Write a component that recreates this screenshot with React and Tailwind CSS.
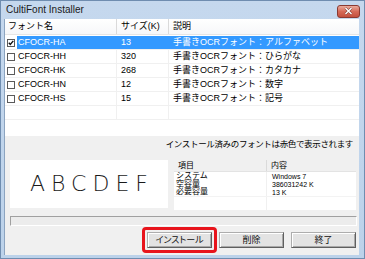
import React from 'react';

const fonts = [
  { name: 'CFOCR-HA', size: '13', desc: '手書きOCRフォント：アルファベット', checked: true, selected: true },
  { name: 'CFOCR-HH', size: '320', desc: '手書きOCRフォント：ひらがな' },
  { name: 'CFOCR-HK', size: '268', desc: '手書きOCRフォント：カタカナ' },
  { name: 'CFOCR-HN', size: '12', desc: '手書きOCRフォント：数字' },
  { name: 'CFOCR-HS', size: '15', desc: '手書きOCRフォント：記号' },
];

const info = [
  ['システム', 'Windows 7'],
  ['空容量', '386031242 K'],
  ['必要容量', '13 K'],
];

function CheckBox({ checked }) {
  return (
    <svg width="8" height="8" viewBox="0 0 8 8" className="block">
      <rect x="0.5" y="0.5" width="7" height="7" fill="#fff" stroke="#5a5a5a" />
      {checked && <path d="M1.8 3.8 L3.3 5.4 L6.3 1.9" fill="none" stroke="#111" strokeWidth="1.4" />}
    </svg>
  );
}

function Btn({ children }) {
  return (
    <button className="w-[65px] h-[16px] flex items-center justify-center bg-[#e3e3e3] border border-[#adadad] border-b-[#5f5f5f] border-r-[#5f5f5f] shadow-[inset_1px_1px_0_#fff,inset_-1px_-1px_0_#a8a8a8] text-[9px] leading-none text-[#111] [font-feature-settings:'palt']">
      {children}
    </button>
  );
}

export default function App() {
  return (
    <div className="w-[365px] h-[259px] flex flex-col overflow-hidden border border-[#6f8db0] bg-linear-to-b from-[#c5d8ee] to-[#bcd2ea] font-['Liberation_Sans','Noto_Sans_CJK_JP',sans-serif] text-black">
      {/* title bar */}
      <div className="h-[18px] flex items-center justify-between pl-[5px] pr-[4px]">
        <span className="text-[10px] leading-none text-[#1a1a1a]">CultiFont Installer</span>
        <div className="w-[23px] h-[13px] mt-[2px] flex items-center justify-center rounded-[3px] border border-[#8a3a32] bg-linear-to-b from-[#e9aa9c] via-[#d66a58] to-[#c4503e]">
          <svg width="9" height="8" viewBox="0 0 9 8">
            <path d="M1.5 1 L7.5 7 M7.5 1 L1.5 7" stroke="#6a2a22" strokeWidth="2.4" />
            <path d="M1.5 1 L7.5 7 M7.5 1 L1.5 7" stroke="#fff" strokeWidth="1.5" />
          </svg>
        </div>
      </div>

      {/* client area */}
      <div className="flex-1 ml-[3px] mr-[5px] mb-[3px] bg-[#f0f0f0] flex flex-col border-l border-[#8ca4c0]">
        {/* list view */}
        <div className="h-[117px] bg-white flex flex-col text-[9px] leading-none">
          <div className="h-[16px] flex border-b border-[#e5e5e5] bg-linear-to-b from-white to-[#f6f7f9]">
            <div className="w-[111px] flex items-center pl-[3px]">フォント名</div>
            <div className="w-[52px] flex items-center pl-[4px] border-l border-[#dadada]">サイズ(K)</div>
            <div className="flex-1 flex items-center pl-[4px] border-l border-[#dadada]">説明</div>
          </div>
          <div className="h-[1px]" />
          {fonts.map((f) => (
            <div key={f.name} className="h-[14px] flex border-b border-[#f0f0f0]">
              <div className="w-[12px] flex items-center pl-[2px] bg-white">
                <CheckBox checked={f.checked} />
              </div>
              <div className={`flex-1 flex ${f.selected ? 'bg-[#3399ff] text-white' : ''}`}>
                <div className="w-[99px] flex items-center pl-[1px]">{f.name}</div>
                <div className={`w-[52px] flex items-center pl-[4px] border-l ${f.selected ? 'border-[#3399ff]' : 'border-[#f0f0f0]'}`}>{f.size}</div>
                <div className={`flex-1 flex items-center pl-[4px] border-l ${f.selected ? 'border-[#3399ff]' : 'border-[#f0f0f0]'}`}>{f.desc}</div>
              </div>
            </div>
          ))}
          <div className="h-[14px] flex border-b border-[#f0f0f0]">
            <div className="w-[111px]" />
            <div className="w-[52px] border-l border-[#f0f0f0]" />
            <div className="flex-1 border-l border-[#f0f0f0]" />
          </div>
        </div>

        {/* message */}
        <div className="mt-[1px] h-[14px] flex items-center justify-end pr-[6px] text-[8.5px] tracking-[-0.35px] leading-none">
          インストール済みのフォントは赤色で表示されます
        </div>

        {/* preview + info */}
        <div className="mt-[9px] h-[50px] flex gap-[6px] pl-[5px] pr-[3px]">
          <div className="w-[158px] h-[48px] bg-white flex items-center justify-center">
            <span className="font-['DejaVu_Sans',sans-serif] font-extralight text-[22px] leading-none tracking-[6px] pl-[6px] text-[#1a1a1a]">ABCDEF</span>
          </div>
          <div className="flex-1 flex flex-col">
            <div className="h-[12px] flex text-[8px] leading-none border-b border-[#e3e3e3]">
              <div className="w-[92px] flex items-center pl-[4px]">項目</div>
              <div className="flex-1 flex items-center pl-[4px] border-l border-[#dadada]">内容</div>
            </div>
            <div className="flex-1 bg-white flex flex-col">
              {info.map(([k, v]) => (
                <div key={k} className="h-[8px] flex">
                  <div className="w-[92px] flex items-center pl-[2px] text-[8px] leading-none">{k}</div>
                  <div className="flex-1 flex items-center pl-[5px] text-[7px] leading-none border-l border-[#f0f0f0]">{v}</div>
                </div>
              ))}
              <div className="flex-1 flex border-t border-[#f3f3f3]">
                <div className="w-[92px]" />
                <div className="flex-1 border-l border-[#f0f0f0]" />
              </div>
            </div>
          </div>
        </div>

        {/* progress bar */}
        <div className="mt-[6px] h-[10px] ml-[5px] mr-[2px] bg-[#ececec] border border-[#a0a0a0] border-b-white border-r-white" />

        {/* buttons */}
        <div className="mt-[6px] flex justify-end gap-[7px] pr-[3px]">
          <div className="relative">
            <Btn>インストール</Btn>
            <div className="absolute -inset-[5px] rounded-[4px] border-[3px] border-[#e8141c]" />
          </div>
          <Btn>削除</Btn>
          <Btn>終了</Btn>
        </div>
      </div>
    </div>
  );
}
